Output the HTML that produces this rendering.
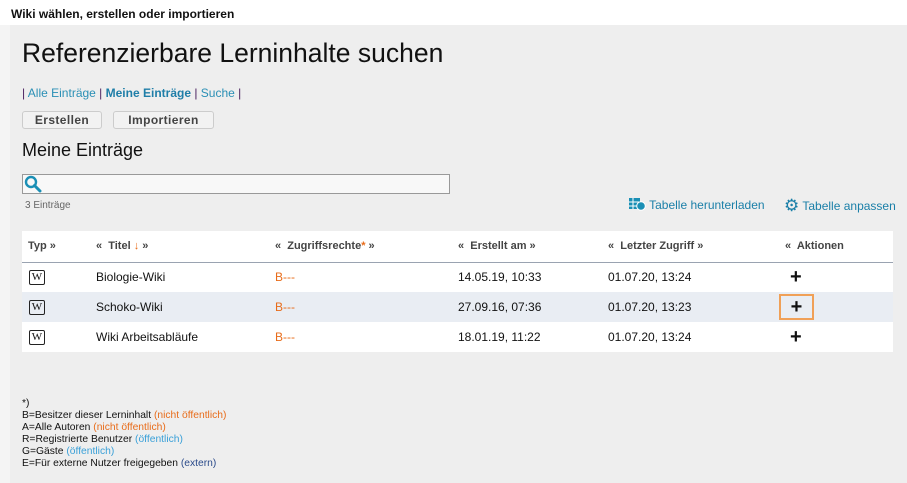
<!DOCTYPE html>
<html><head><meta charset="utf-8"><style>
*{margin:0;padding:0;box-sizing:border-box}
body{width:907px;height:483px;overflow:hidden;background:#f4f4f4;font-family:"Liberation Sans",Arial,sans-serif;position:relative}
.top{position:absolute;left:0;top:0;width:907px;height:25px;background:#fff;font-size:12px;font-weight:bold;color:#111;padding:7px 0 0 11px}
.panel{position:absolute;left:10px;top:25px;width:897px;height:458px;background:#eeeeee}
.abs{position:absolute}
h1{position:absolute;left:22px;top:38px;font-size:26.5px;font-weight:normal;color:#111}
.nav{left:22px;top:86px;font-size:12px;color:#4a1f5e}
.nav a{color:#2a8fb5;text-decoration:none}
.btn{top:111px;height:18px;border:1px solid #ccc;border-radius:3px;background:#f2f2f2;font-size:12px;font-weight:bold;color:#444;text-align:center;line-height:16px;letter-spacing:.4px}
h2{position:absolute;left:22px;top:140px;font-size:18px;font-weight:normal;color:#111}
.search{left:22px;top:174px;width:428px;height:20px;border:1px solid #999;background:#f8f8f8}
.cnt{left:25px;top:200px;font-size:10px;color:#666}
.tl{top:197px;font-size:12px;color:#1a7fa8}
table{position:absolute;left:22px;top:231px;width:871px;border-collapse:collapse;background:#fff;font-size:12px;color:#111}
th{height:31px;text-align:left;font-size:11px;color:#444;font-weight:bold;border-bottom:1px solid #9aa3b1;padding:0}
td{height:30px;padding:0}
tr.alt td{background:#e9edf3}
.w{display:inline-block;width:16px;height:15px;border:1px solid #222;border-radius:2px;font-family:"Liberation Serif",serif;font-size:11px;text-align:center;line-height:13px;margin-left:7px;vertical-align:middle}
.o{color:#e86c1a}
.plus{font-size:20px;font-weight:bold;line-height:20px}
.leg{left:22px;top:398px;font-size:10.3px;line-height:12px;color:#111}
.leg .b{color:#3aa0d8}.leg .d{color:#2a4a8a}
</style></head><body>
<div class="top">Wiki wählen, erstellen oder importieren</div>
<div class="panel"></div>
<h1>Referenzierbare Lerninhalte suchen</h1>
<div class="abs nav">| <a>Alle Einträge</a> | <a style="font-weight:bold;color:#1f7ea8">Meine Einträge</a> | <a>Suche</a> |</div>
<div class="abs btn" style="left:22px;width:80px">Erstellen</div>
<div class="abs btn" style="left:113px;width:101px">Importieren</div>
<h2>Meine Einträge</h2>
<div class="abs search"><svg width="18" height="18" viewBox="0 0 18 18" style="position:absolute;left:1px;top:0"><circle cx="7" cy="7" r="5" fill="none" stroke="#1a8fb5" stroke-width="2.4"/><path d="M10.5 10.5L16 16" stroke="#1a8fb5" stroke-width="3" stroke-linecap="round"/></svg></div>
<div class="abs cnt">3 Einträge</div>
<div class="abs tl" style="left:629px;top:197px"><svg width="17" height="14" viewBox="0 0 17 14" style="vertical-align:-2px"><rect x="0" y="1" width="11" height="11" fill="#1a8fb5"/><path d="M0 5h11M0 9h11M4 1v11" stroke="#fff" stroke-width="1"/><circle cx="12" cy="9" r="4.3" fill="#1a8fb5" stroke="#fff"/></svg> Tabelle herunterladen</div>
<div class="abs tl" style="left:784px;top:196px"><span style="font-size:17px;vertical-align:-1px">⚙</span> Tabelle anpassen</div>
<table>
<tr><th style="width:73px;padding-left:6px">Typ »</th><th style="width:180px;padding-left:1px">«&nbsp; Titel <span style="color:#e86c1a;font-weight:normal">↓</span> »</th><th style="width:183px">«&nbsp; Zugriffsrechte<span class="o">*</span> »</th><th style="width:150px">«&nbsp; Erstellt am »</th><th style="width:177px">«&nbsp; Letzter Zugriff »</th><th>«&nbsp; Aktionen</th></tr>
<tr><td><span class="w">W</span></td><td style="padding-left:1px">Biologie-Wiki</td><td class="o">B---</td><td>14.05.19, 10:33</td><td>01.07.20, 13:24</td><td><span class="plus" style="margin-left:5px">+</span></td></tr>
<tr class="alt"><td><span class="w">W</span></td><td style="padding-left:1px">Schoko-Wiki</td><td class="o">B---</td><td>27.09.16, 07:36</td><td>01.07.20, 13:23</td><td><span class="plus" style="display:inline-block;border:2px solid #f0a057;width:35px;height:26px;text-align:center;line-height:22px;margin-left:-6px">+</span></td></tr>
<tr><td><span class="w">W</span></td><td style="padding-left:1px">Wiki Arbeitsabläufe</td><td class="o">B---</td><td>18.01.19, 11:22</td><td>01.07.20, 13:24</td><td><span class="plus" style="margin-left:5px">+</span></td></tr>
</table>
<div class="abs leg">*)<br>B=Besitzer dieser Lerninhalt <span class="o">(nicht öffentlich)</span><br>A=Alle Autoren <span class="o">(nicht öffentlich)</span><br>R=Registrierte Benutzer <span class="b">(öffentlich)</span><br>G=Gäste <span class="b">(öffentlich)</span><br>E=Für externe Nutzer freigegeben <span class="d">(extern)</span></div>
</body></html>
